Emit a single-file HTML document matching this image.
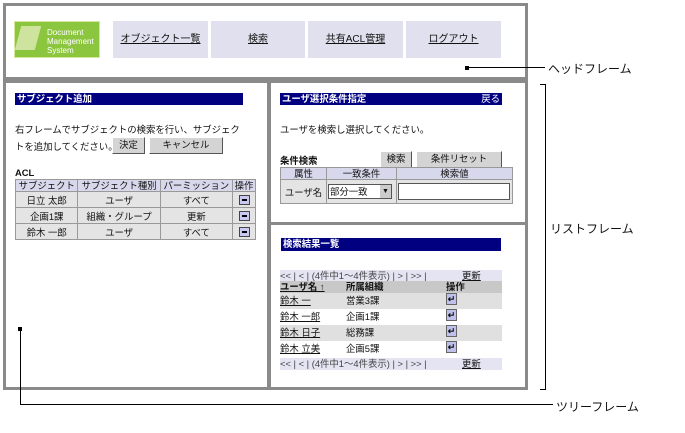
<!DOCTYPE html><html><head><meta charset="utf-8"><style>
*{margin:0;padding:0;box-sizing:border-box}
body{width:685px;height:433px;background:#fff;position:relative;overflow:hidden;font-family:"Liberation Sans","Noto Sans CJK JP",sans-serif;font-size:9.4px;color:#111}
.a{position:absolute;white-space:nowrap}
.fr{position:absolute;border:3px solid #8a8a8a;background:#fff}
.bar{position:absolute;background:#000080;color:#fff;font-weight:bold;height:12px;line-height:12px;padding-left:2px;font-size:9.4px;white-space:nowrap}
.nav{position:absolute;top:21px;height:37px;background:#e0e0ee;text-align:center;line-height:37px;text-decoration:underline;font-size:10px}
.btn{position:absolute;background:#d4d4d4;border:1px solid #fff;border-right-color:#555;border-bottom-color:#555;text-align:center;line-height:14px;height:17px;white-space:nowrap}
table{border-collapse:collapse;position:absolute;font-size:9.4px;white-space:nowrap}
td{border:1px solid #999;text-align:center;height:16px;padding:0 1px}
.h td{background:#d8d8ec;height:12px;line-height:11px}
.m{display:inline-block;width:11px;height:10px;background:#c8c8f0;border:1px solid #444;vertical-align:middle;position:relative}
.m:after{content:"";position:absolute;left:2px;top:3px;width:5px;height:2px;background:#000}
.row{position:absolute;left:280px;width:222px;height:16px;line-height:16px}
.row span{position:absolute}
.u{text-decoration:underline}
.ent{display:inline-block;width:11px;height:12px;background:#c0c0ec;border:1px solid #666;font-size:9px;line-height:10px;text-align:center;font-weight:bold;vertical-align:middle}
.pg{position:absolute;left:280px;width:222px;height:12px;background:#e4e4f2;line-height:12px;color:#444;white-space:nowrap}
</style></head><body>
<div class="fr" style="left:3px;top:3px;width:525px;height:77px"></div>
<div class="a" style="left:14px;top:21px;width:86px;height:37px;background:#8cc63f;border:1px solid #d6e89a;color:#fff;font-size:8px;line-height:9px;padding:6px 0 0 32px">Document<br>Management<br>System</div>
<div class="a" style="left:18px;top:26px;width:20px;height:24px;background:#e8f0c8;transform:skewX(-15deg);opacity:.7"></div>
<div class="nav" style="left:113px;width:95px">オブジェクト一覧</div>
<div class="nav" style="left:211px;width:94px">検索</div>
<div class="nav" style="left:308px;width:95px">共有ACL管理</div>
<div class="nav" style="left:406px;width:95px">ログアウト</div>
<div class="a" style="left:465px;top:66px;width:4px;height:4px;background:#000"></div>
<div class="a" style="left:467px;top:67px;width:78px;height:1px;background:#000"></div>
<div class="a" style="left:548px;top:60px;font-size:12px">ヘッドフレーム</div>

<div class="fr" style="left:3px;top:80px;width:267px;height:310px"></div>
<div class="fr" style="left:268px;top:80px;width:260px;height:145px"></div>
<div class="fr" style="left:268px;top:222px;width:260px;height:168px"></div>

<div class="bar" style="left:15px;top:93px;width:228px">サブジェクト追加</div>
<div class="a" style="left:15px;top:121px;line-height:17px">右フレームでサブジェクトの検索を行い、サブジェク<br>トを追加してください。</div>
<div class="btn" style="left:112px;top:137px;width:33px">決定</div>
<div class="btn" style="left:149px;top:137px;width:74px">キャンセル</div>
<div class="a" style="left:15px;top:167px;font-weight:bold">ACL</div>
<table style="left:15px;top:179px;width:241px;background:#e4e4e4">
<tr class="h"><td>サブジェクト</td><td>サブジェクト種別</td><td>パーミッション</td><td>操作</td></tr>
<tr><td>日立 太郎</td><td>ユーザ</td><td>すべて</td><td><span class="m"></span></td></tr>
<tr><td>企画1課</td><td>組織・グループ</td><td>更新</td><td><span class="m"></span></td></tr>
<tr><td>鈴木 一郎</td><td>ユーザ</td><td>すべて</td><td><span class="m"></span></td></tr>
</table>

<div class="bar" style="left:280px;top:93px;width:222px">ユーザ選択条件指定<span style="position:absolute;right:2px;font-weight:normal">戻る</span></div>
<div class="a" style="left:280px;top:122px">ユーザを検索し選択してください。</div>
<div class="a" style="left:280px;top:153px;font-weight:bold">条件検索</div>
<div class="btn" style="left:380px;top:151px;width:32px">検索</div>
<div class="btn" style="left:416px;top:151px;width:86px">条件リセット</div>
<table style="left:280px;top:167px;width:233px;background:#e4e4e4">
<tr class="h"><td style="width:46px">属性</td><td style="width:70px">一致条件</td><td>検索値</td></tr>
<tr><td style="height:24px">ユーザ名</td><td style="text-align:left"><span style="display:inline-block;border:1px solid #555;background:#fff;width:64px;height:15px;line-height:13px;padding-left:1px;position:relative">部分一致<span style="position:absolute;right:0;top:0;width:11px;height:13px;background:#ccc;font-size:7px;text-align:center">▼</span></span></td><td style="text-align:left"><span style="display:inline-block;border:1px solid #555;background:#fff;width:112px;height:17px;vertical-align:middle"></span></td></tr>
</table>

<div class="bar" style="left:281px;top:238px;width:220px;height:13px">検索結果一覧</div>
<div class="pg" style="top:270px">&lt;&lt; | &lt; | (4件中1～4件表示) | &gt; | &gt;&gt; | <span class="u" style="position:absolute;left:182px;color:#111">更新</span></div>
<div class="row" style="top:281px;height:12px;line-height:12px;background:#c8c8c8;font-weight:bold"><span class="u" style="left:0">ユーザ名 ↑</span><span style="left:66px">所属組織</span><span style="left:166px">操作</span></div>
<div class="row" style="top:293px;background:#e0e0e0"><span class="u" style="left:0">鈴木 一</span><span style="left:66px">営業3課</span><span style="left:166px"><span class="ent">↵</span></span></div>
<div class="row" style="top:309px"><span class="u" style="left:0">鈴木 一郎</span><span style="left:66px">企画1課</span><span style="left:166px"><span class="ent">↵</span></span></div>
<div class="row" style="top:325px;background:#e0e0e0"><span class="u" style="left:0">鈴木 日子</span><span style="left:66px">総務課</span><span style="left:166px"><span class="ent">↵</span></span></div>
<div class="row" style="top:341px"><span class="u" style="left:0">鈴木 立美</span><span style="left:66px">企画5課</span><span style="left:166px"><span class="ent">↵</span></span></div>
<div class="pg" style="top:358px">&lt;&lt; | &lt; | (4件中1～4件表示) | &gt; | &gt;&gt; | <span class="u" style="position:absolute;left:182px;color:#111">更新</span></div>

<div class="a" style="left:540px;top:84px;width:6px;height:306px;border:1px solid #000;border-left:none"></div>
<div class="a" style="left:550px;top:220px;font-size:12px">リストフレーム</div>
<div class="a" style="left:18px;top:327px;width:4px;height:4px;background:#000"></div>
<div class="a" style="left:20px;top:329px;width:533px;height:76px;border-left:1px solid #000;border-bottom:1px solid #000"></div>
<div class="a" style="left:556px;top:398px;font-size:12px">ツリーフレーム</div>
</body></html>
